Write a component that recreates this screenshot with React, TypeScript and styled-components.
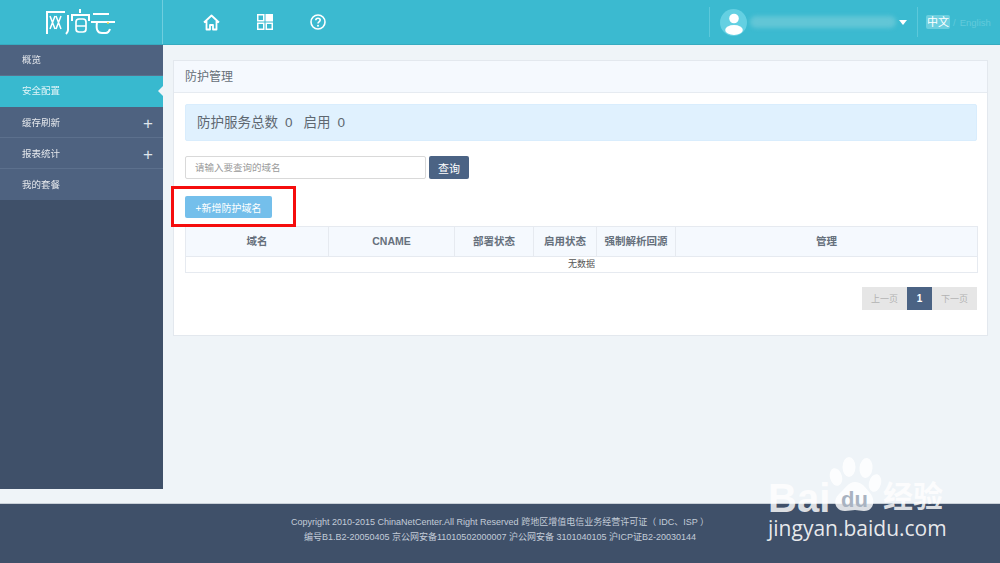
import React from "react";
import styled, { createGlobalStyle } from "styled-components";

const GlobalStyle = createGlobalStyle`
  html, body {
    margin: 0;
    padding: 0;
    height: 563px;
    overflow: hidden;
    background: #eff4f8;
    font-family: "Liberation Sans", "Noto Sans CJK SC", sans-serif;
  }
  * { box-sizing: border-box; }
`;

const Page = styled.div`
  position: relative;
  width: 1000px;
  height: 563px;
  display: flex;
  flex-direction: column;
  overflow: hidden;
`;

const Header = styled.header`
  height: 45px;
  flex: none;
  display: flex;
  background: #3bbad0;
  border-bottom: 1px solid #36abc0;
`;

const LogoCell = styled.div`
  width: 163px;
  display: flex;
  align-items: center;
  justify-content: center;
  border-right: 1px solid #6fcede;
`;

const NavIcons = styled.nav`
  flex: 1;
  display: flex;
  align-items: center;
  gap: 37px;
  padding-left: 40px;
`;

const UserArea = styled.div`
  width: 209px;
  flex: none;
  margin: 7px 0;
  display: flex;
  align-items: center;
  padding-left: 10px;
  border-left: 1px solid #5cc8da;
  border-right: 1px solid #5cc8da;
`;

const Avatar = styled.div`
  width: 27px;
  height: 27px;
  border-radius: 50%;
  background: #64d0e2;
  flex: none;
`;

const BlurredName = styled.div`
  width: 146px;
  height: 12px;
  margin-left: 3px;
  background: #62c6d6;
  border-radius: 6px;
  filter: blur(2px);
`;

const Caret = styled.div`
  margin-left: 3px;
  border-left: 4px solid transparent;
  border-right: 4px solid transparent;
  border-top: 5px solid #ffffff;
`;

const LangArea = styled.div`
  width: 82px;
  flex: none;
  display: flex;
  align-items: center;
  padding-left: 8px;
  font-size: 9.5px;
  color: #62cadb;
`;

const LangActive = styled.span`
  background: #6ccfdf;
  color: #ffffff;
  border-radius: 2px;
  padding: 0 1px;
  height: 14px;
  line-height: 14px;
  font-size: 11px;
`;

const LangSep = styled.span`
  margin: 0 4px 0 3px;
`;

const Body = styled.div`
  flex: 1;
  display: flex;
  min-height: 0;
`;

const Sidebar = styled.aside`
  width: 163px;
  height: 444px;
  flex: none;
  background: #3f5069;
`;

const MenuItem = styled.div<{ $active?: boolean }>`
  position: relative;
  height: 31px;
  display: flex;
  align-items: center;
  justify-content: space-between;
  padding: 0 10px 0 22px;
  font-size: 9.5px;
  color: #ffffff;
  background: ${props => (props.$active ? "#38b9cf" : "#4e6280")};
  border-bottom: 1px solid ${props => (props.$active ? "#38b9cf" : "#5c708d")};
  &:last-child {
    border-bottom: 0;
  }
`;

const MenuLabel = styled.span<{ $raised?: boolean }>`
  opacity: 0.85;
  margin-top: ${props => (props.$raised ? "-1px" : "-2px")};
`;

const Plus = styled.span`
  font-size: 17px;
  font-weight: 400;
  line-height: 1;
  color: #dfe6ee;
  margin-top: 2px;
`;

const ActiveNotch = styled.span`
  position: absolute;
  right: 0;
  top: 10px;
  border-top: 5px solid transparent;
  border-bottom: 5px solid transparent;
  border-right: 5px solid #eff4f8;
`;

const Main = styled.main`
  flex: 1;
  min-width: 0;
  padding: 15px 12px 0 10px;
`;

const Panel = styled.section`
  height: 276px;
  background: #ffffff;
  border: 1px solid #e3e8ee;
  display: flex;
  flex-direction: column;
`;

const PanelTitle = styled.div`
  height: 32px;
  flex: none;
  padding: 0 0 2px 11px;
  display: flex;
  align-items: center;
  font-size: 12px;
  color: #666f78;
  background: #f5f9fe;
  border-bottom: 1px solid #e6ebf1;
`;

const PanelBody = styled.div`
  padding: 11px 9px 0 11px;
  display: flex;
  flex-direction: column;
`;

const Summary = styled.div`
  height: 37px;
  margin-right: 1px;
  display: flex;
  align-items: baseline;
  padding-left: 11px;
  gap: 7px;
  font-size: 13.5px;
  line-height: 35px;
  color: #5e6770;
  background: #e0f1fe;
  border: 1px solid #d9edfd;
  border-radius: 2px;
`;

const SummaryNumber = styled.span`
  margin-right: 4px;
`;

const SearchRow = styled.div`
  margin-top: 15px;
  display: flex;
  gap: 3px;
`;

const SearchInput = styled.input`
  width: 241px;
  height: 23px;
  padding: 0 9px;
  font-family: inherit;
  font-size: 9.5px;
  background: #ffffff;
  border: 1px solid #d9d9d9;
  border-radius: 2px;
  outline: none;
  &::placeholder {
    color: #9a9a9a;
    opacity: 1;
  }
`;

const SearchButton = styled.button`
  width: 40px;
  height: 23px;
  padding: 0;
  font-family: inherit;
  font-size: 11px;
  color: #ffffff;
  background: #4b6384;
  border: 0;
  border-radius: 2px;
`;

const AddRow = styled.div`
  position: relative;
  margin-top: 17px;
  height: 30px;
`;

const AddButton = styled.button`
  display: block;
  width: 87px;
  height: 22px;
  padding: 0;
  font-family: inherit;
  font-size: 10px;
  color: #ffffff;
  background: #74bfeb;
  border: 0;
  border-radius: 2px;
`;

const Highlight = styled.div`
  position: absolute;
  left: -14px;
  top: -10px;
  width: 125px;
  height: 41px;
  border: 3px solid #f50d0d;
`;

const Table = styled.table`
  width: 793px;
  table-layout: fixed;
  border-collapse: collapse;
  font-size: 10.5px;
`;

const HeadCell = styled.th<{ $width?: number }>`
  width: ${props => (props.$width ? `${props.$width}px` : "auto")};
  height: 30px;
  padding: 0 0 2px;
  font-weight: 700;
  color: #66707c;
  background: #f5f9fe;
  border: 1px solid #e6eaf0;
`;

const EmptyCell = styled.td`
  height: 16px;
  padding: 0 0 2px;
  text-align: center;
  font-size: 9px;
  color: #555555;
  border: 1px solid #e6eaf0;
`;

const Pager = styled.div`
  margin-top: 14px;
  align-self: flex-end;
  display: flex;
  height: 23px;
  margin-right: 1px;
`;

const PageButton = styled.div<{ $current?: boolean; $width: number }>`
  width: ${props => props.$width}px;
  display: flex;
  align-items: center;
  justify-content: center;
  font-size: ${props => (props.$current ? "10px" : "9px")};
  font-weight: ${props => (props.$current ? 700 : 400)};
  color: ${props => (props.$current ? "#ffffff" : "#b3b3b3")};
  background: ${props => (props.$current ? "#4b6384" : "#e6e6e6")};
`;

const Footer = styled.footer`
  height: 60px;
  flex: none;
  padding-top: 11px;
  background: #3f5069;
  border-top: 1px solid #c9d0d8;
  text-align: center;
  font-size: 9px;
  line-height: 15px;
  color: #c3ccd8;
`;

const Watermark = styled.div`
  position: absolute;
  left: 766px;
  top: 456px;
  width: 182px;
  height: 90px;
  color: rgba(255, 255, 255, 0.82);
`;

const WatermarkBai = styled.span`
  position: absolute;
  left: 2px;
  top: 25px;
  font-size: 40px;
  font-weight: 700;
  line-height: 34px;
`;

const PawSlot = styled.div`
  position: absolute;
  left: 62px;
  top: 1px;
`;

const WatermarkDu = styled.span`
  position: absolute;
  left: 75px;
  top: 33px;
  font-size: 22px;
  font-weight: 700;
  line-height: 1;
  color: #a9b3c1;
`;

const WatermarkJing = styled.span`
  position: absolute;
  left: 117px;
  top: 26px;
  font-size: 30px;
  line-height: 1;
  white-space: nowrap;
  font-weight: 700;
`;

const WatermarkUrl = styled.div`
  position: absolute;
  left: 2px;
  top: 62px;
  font-size: 21px;
  line-height: 1;
  white-space: nowrap;
  font-family: "Open Sans", "Liberation Sans", sans-serif;
  color: rgba(255, 255, 255, 0.88);
`;

const Logo = () => (
  <svg width="70" height="26" viewBox="0 0 70 26" fill="none" stroke="#ffffff" strokeWidth="2">
    <path d="M1 25V3H19" />
    <path d="M4 7l5 13M9 7L4 20M10 7l5 13M15 7l-5 13" strokeWidth="1.5" />
    <path d="M22 6V21c0 2-1 3-2 4" />
    <path d="M34 0v4M26 12V6H43v6" />
    <path d="M30 13c0-2 1-3 3-3h4c2 0 3 1 3 3v7c0 2-1 3-3 3h-4c-2 0-3-1-3-3zM30 17H40" strokeWidth="1.7" />
    <path d="M47 5H63M45 13H69" />
    <path d="M51 13c-1 7 0 11 5 11h4c2 0 3-1 4-4" />
    <circle cx="62" cy="14" r="1" fill="#f2d640" stroke="none" />
  </svg>
);

const HomeIcon = () => (
  <svg width="17" height="17" viewBox="0 0 17 17" fill="none" stroke="#ffffff" strokeWidth="1.8">
    <path d="M1 8.500L8.500 1.500L16 8.500M3.500 7V15.500H7V11H10V15.500H13.500V7" strokeLinejoin="round" />
  </svg>
);

const GridIcon = () => (
  <svg width="16" height="16" viewBox="0 0 16 16" stroke="#ffffff" strokeWidth="1.5" fill="none">
    <rect x="0.750" y="0.750" width="6" height="6" />
    <rect x="9.250" y="0.750" width="6" height="6" fill="#ffffff" />
    <rect x="0.750" y="9.250" width="6" height="6" />
    <rect x="9.250" y="9.250" width="6" height="6" />
  </svg>
);

const HelpIcon = () => (
  <svg width="16" height="16" viewBox="0 0 16 16" fill="none" stroke="#ffffff" strokeWidth="1.6">
    <circle cx="8" cy="8" r="7" />
    <path d="M5.800 6.200C5.800 4.900 6.800 4.200 8 4.200s2.200.8 2.200 1.900c0 1.800-2.200 1.700-2.200 3.400" />
    <circle cx="8" cy="11.800" r="1" fill="#ffffff" stroke="none" />
  </svg>
);

const UserGlyph = () => (
  <svg width="27" height="27" viewBox="0 0 27 27" fill="#ffffff">
    <circle cx="14" cy="9.500" r="4.800" />
    <ellipse cx="14" cy="21" rx="8.800" ry="5" />
  </svg>
);

const Paw = () => (
  <svg width="54" height="56" viewBox="0 0 54 56" fill="rgba(255,255,255,0.82)">
    <ellipse cx="8" cy="20" rx="6" ry="9" transform="rotate(-15 8 20)" />
    <ellipse cx="21" cy="10" rx="6.500" ry="10" />
    <ellipse cx="38" cy="11" rx="6.500" ry="10" transform="rotate(6 38 11)" />
    <ellipse cx="47" cy="26" rx="6" ry="9" transform="rotate(15 47 26)" />
    <path d="M27 25c7 0 10 5 15 11 6 7 4 18-6 18-4 0-6-1-9-1s-6 1-10 1C7 54 4 44 11 37c6-5 9-12 16-12z" />
  </svg>
);

const menu = [
  { label: "概览" },
  { label: "安全配置", active: true },
  { label: "缓存刷新", expandable: true },
  { label: "报表统计", expandable: true },
  { label: "我的套餐" },
];

const columns = [
  { title: "域名", width: 143 },
  { title: "CNAME", width: 126 },
  { title: "部署状态", width: 79 },
  { title: "启用状态", width: 63 },
  { title: "强制解析回源", width: 79 },
  { title: "管理" },
];

const App: React.FC = () => {
  return (
    <Page>
      <GlobalStyle />
      <Header>
        <LogoCell>
          <Logo />
        </LogoCell>
        <NavIcons>
          <HomeIcon />
          <GridIcon />
          <HelpIcon />
        </NavIcons>
        <UserArea>
          <Avatar>
            <UserGlyph />
          </Avatar>
          <BlurredName />
          <Caret />
        </UserArea>
        <LangArea>
          <LangActive>中文</LangActive>
          <LangSep>/</LangSep>
          <span>English</span>
        </LangArea>
      </Header>
      <Body>
        <Sidebar>
          {menu.map(item => (
            <MenuItem key={item.label} $active={item.active}>
              <MenuLabel $raised={item.expandable}>{item.label}</MenuLabel>
              {item.expandable && <Plus>+</Plus>}
              {item.active && <ActiveNotch />}
            </MenuItem>
          ))}
        </Sidebar>
        <Main>
          <Panel>
            <PanelTitle>防护管理</PanelTitle>
            <PanelBody>
              <Summary>
                <span>防护服务总数</span>
                <SummaryNumber>0</SummaryNumber>
                <span>启用</span>
                <span>0</span>
              </Summary>
              <SearchRow>
                <SearchInput placeholder="请输入要查询的域名" />
                <SearchButton>查询</SearchButton>
              </SearchRow>
              <AddRow>
                <AddButton>+新增防护域名</AddButton>
                <Highlight />
              </AddRow>
              <Table>
                <thead>
                  <tr>
                    {columns.map(col => (
                      <HeadCell key={col.title} $width={col.width}>
                        {col.title}
                      </HeadCell>
                    ))}
                  </tr>
                </thead>
                <tbody>
                  <tr>
                    <EmptyCell colSpan={6}>无数据</EmptyCell>
                  </tr>
                </tbody>
              </Table>
              <Pager>
                <PageButton $width={45}>上一页</PageButton>
                <PageButton $width={25} $current>
                  1
                </PageButton>
                <PageButton $width={45}>下一页</PageButton>
              </Pager>
            </PanelBody>
          </Panel>
        </Main>
      </Body>
      <Footer>
        <div>Copyright 2010-2015 ChinaNetCenter.All Right Reserved 跨地区增值电信业务经营许可证（ IDC、ISP ）</div>
        <div>编号B1.B2-20050405 京公网安备11010502000007 沪公网安备 3101040105 沪ICP证B2-20030144</div>
      </Footer>
      <Watermark>
        <WatermarkBai>Bai</WatermarkBai>
        <PawSlot>
          <Paw />
        </PawSlot>
        <WatermarkDu>du</WatermarkDu>
        <WatermarkJing>经验</WatermarkJing>
        <WatermarkUrl>jingyan.baidu.com</WatermarkUrl>
      </Watermark>
    </Page>
  );
};

export default App;
